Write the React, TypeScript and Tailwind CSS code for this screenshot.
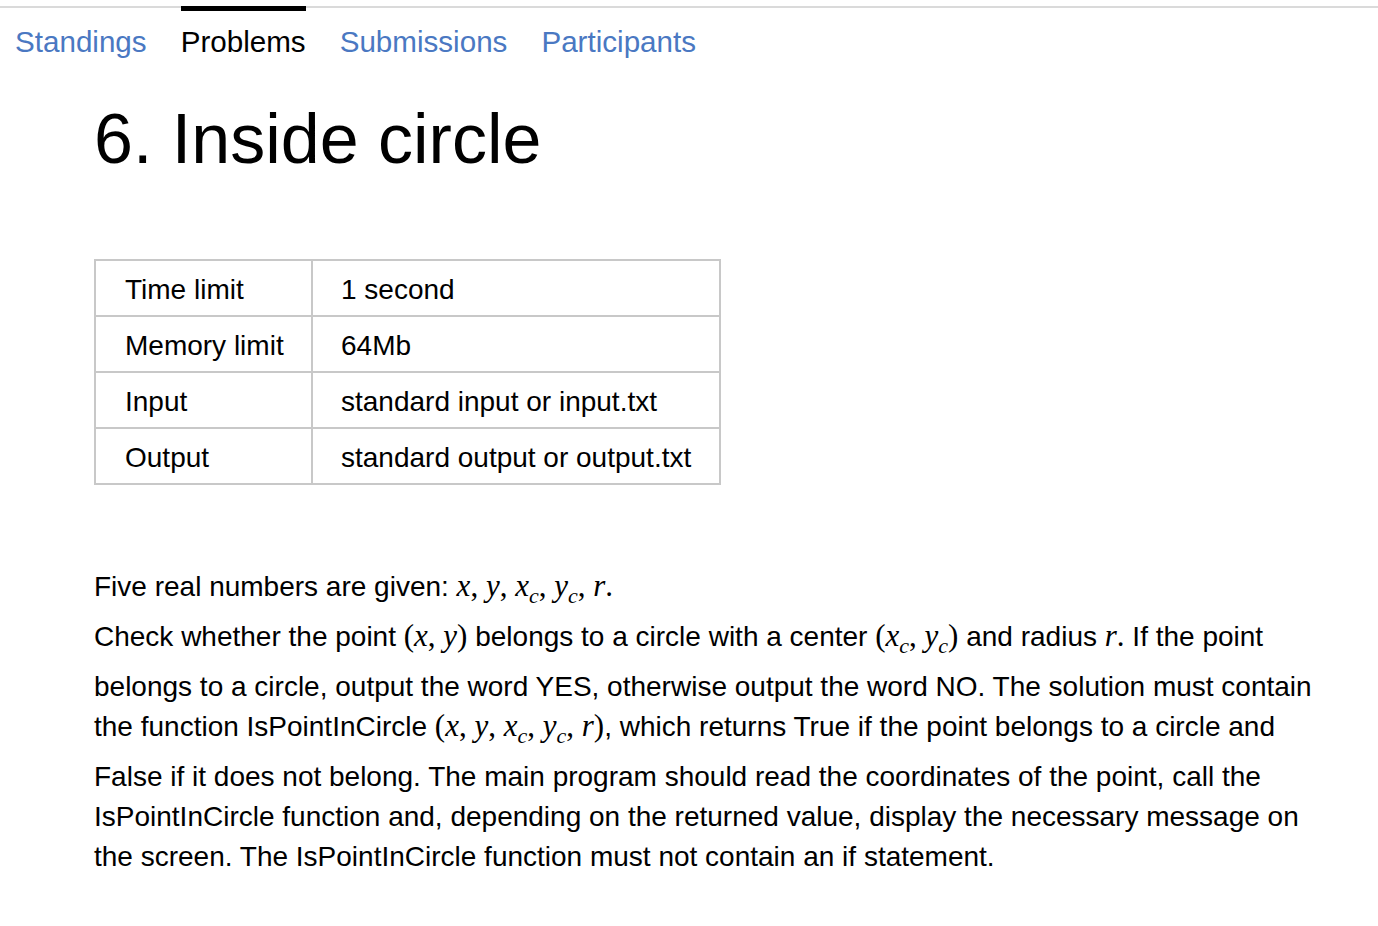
import React from "react";

const SANS = "font-['Liberation_Sans',Arial,sans-serif]";

function V({ children }: { children: React.ReactNode }) {
  return (
    <span className="font-['Liberation_Serif','Times_New_Roman',serif] italic text-[31px] leading-none">{children}</span>
  );
}
function P({ children }: { children: React.ReactNode }) {
  return <span className="font-['Liberation_Serif','Times_New_Roman',serif] text-[31px] leading-none">{children}</span>;
}
function Sub({ v, s }: { v: string; s: string }) {
  return (
    <span className="font-['Liberation_Serif','Times_New_Roman',serif] italic text-[31px] leading-none">
      {v}
      <span className="text-[22px] leading-[0] align-[-7px]">{s}</span>
    </span>
  );
}

function Vars() {
  return (
    <>
      <V>x</V>
      <P>, </P>
      <V>y</V>
      <P>, </P>
      <Sub v="x" s="c" />
      <P>, </P>
      <Sub v="y" s="c" />
      <P>, </P>
      <V>r</V>
    </>
  );
}

function Line({ children, tall }: { children: React.ReactNode; tall?: boolean }) {
  return (
    <div className={`h-[40px] leading-[40px] whitespace-nowrap ${tall ? "mb-[10px]" : ""}`}>{children}</div>
  );
}

const rows: [string, string][] = [
  ["Time limit", "1 second"],
  ["Memory limit", "64Mb"],
  ["Input", "standard input or input.txt"],
  ["Output", "standard output or output.txt"],
];

export default function App() {
  return (
    <div className={`${SANS} min-h-[926px] bg-white text-black`}>
      <div className="pt-[6px]">
        <div className="border-t-2 border-[#dadada]">
          <nav className="flex pl-[15px] text-[29.6px] leading-none">
            <span className="mr-[34px] pt-[19px] text-[#4a78c2]">Standings</span>
            <span className="mr-[34px] -mt-[2px] border-t-[5px] border-black pt-[16px] text-black">Problems</span>
            <span className="mr-[34px] pt-[19px] text-[#4a78c2]">Submissions</span>
            <span className="pt-[19px] text-[#4a78c2]">Participants</span>
          </nav>
        </div>
      </div>

      <div className="pl-[94px]">
        <h1 className="mt-[47px] text-[70px] leading-[70px] font-normal">6. Inside circle</h1>

        <div className="mt-[85px] w-[627px] border-2 border-[#c8c8c8] text-[28px]">
          {rows.map(([k, v], i) => (
            <div
              key={k}
              className={`grid grid-cols-[215px_2px_406px] ${i < rows.length - 1 ? "border-b-2 border-[#c8c8c8]" : ""}`}
            >
              <div className="flex h-[54px] items-center pl-[29px] pt-[4px]">{k}</div>
              <div className="bg-[#c8c8c8]" />
              <div className="flex h-[54px] items-center pl-[28px] pt-[4px]">{v}</div>
            </div>
          ))}
        </div>

        <div className="mt-[82px] text-[28px]">
          <Line tall>
            Five real numbers are given: <Vars />
            <P>.</P>
          </Line>
          <Line tall>
            Check whether the point <P>(</P>
            <V>x</V>
            <P>, </P>
            <V>y</V>
            <P>)</P> belongs to a circle with a center <P>(</P>
            <Sub v="x" s="c" />
            <P>, </P>
            <Sub v="y" s="c" />
            <P>)</P> and radius <V>r</V>
            <P>.</P> If the point
          </Line>
          <Line>belongs to a circle, output the word YES, otherwise output the word NO. The solution must contain</Line>
          <Line tall>
            the function IsPointInCircle <P>(</P>
            <Vars />
            <P>)</P>, which returns True if the point belongs to a circle and
          </Line>
          <Line>False if it does not belong. The main program should read the coordinates of the point, call the</Line>
          <Line>IsPointInCircle function and, depending on the returned value, display the necessary message on</Line>
          <Line>the screen. The IsPointInCircle function must not contain an if statement.</Line>
        </div>
      </div>
    </div>
  );
}
